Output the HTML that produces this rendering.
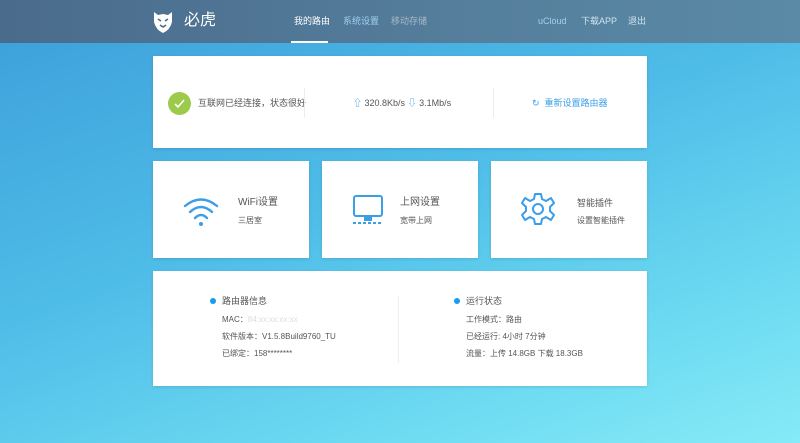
<!DOCTYPE html>
<html><head><meta charset="utf-8"><style>
*{margin:0;padding:0;box-sizing:border-box}
body{width:800px;height:443px;overflow:hidden;position:relative;font-family:"Liberation Sans","Noto Sans CJK SC",sans-serif;background:linear-gradient(160deg,#3c9ed9 0%,#4fbde8 45%,#6fdcf2 80%,#86eaf7 100%)}
.hdr{position:absolute;left:0;top:0;width:800px;height:43px;background:linear-gradient(90deg,#4a6b8c,#557f9c 60%,#5a8aa6);}
.hdr span{position:absolute;top:15px;font-size:9px;line-height:12px;color:#c8d8e6}
.card{position:absolute;background:#fff;box-shadow:0 1px 3px rgba(0,0,0,.12)}
.t{position:absolute;font-size:9px;line-height:12px;color:#555;white-space:nowrap}
.b{color:#3a9ee8}
</style></head><body>
<div class="hdr">
<svg style="position:absolute;left:152px;top:10px" width="22" height="24" viewBox="0 0 22 24"><path d="M2 2 L6 5 L11 4 L16 5 L20 2 L20 12 Q18 20 11 23 Q4 20 2 12Z" fill="#fff"/><path d="M6 9 L9 11 M16 9 L13 11 M8 15 L11 17 L14 15" stroke="#4a6b8c" stroke-width="1.6" fill="none"/></svg>
<span style="left:184px;top:11px;font-size:16px;line-height:20px;color:#fff">必虎</span>
<span style="left:294px;color:#fff">我的路由</span>
<div style="position:absolute;left:291px;top:41px;width:37px;height:2px;background:#fff"></div>
<span style="left:343px;color:#9fd0f0">系统设置</span>
<span style="left:391px;color:#a8b8c8">移动存储</span>
<span style="left:538px;color:#9fd0f0">uCloud</span>
<span style="left:581px;color:#cfe4f2">下载APP</span>
<span style="left:628px;color:#cfe4f2">退出</span>
</div>

<div class="card" style="left:153px;top:56px;width:494px;height:92px">
<div style="position:absolute;left:15px;top:36px;width:23px;height:23px;border-radius:50%;background:#9ccb4b"></div>
<svg style="position:absolute;left:15px;top:36px" width="23" height="23"><path d="M7 12 L10 15 L16 8" stroke="#fff" stroke-width="1.6" fill="none"/></svg>
<div class="t" style="left:45px;top:41px">互联网已经连接，状态很好</div>
<div style="position:absolute;left:151px;top:32px;width:1px;height:30px;background:#eee"></div>
<div class="t" style="left:200px;top:41px"><span class="b">⇧</span> 320.8Kb/s <span class="b">⇩</span> 3.1Mb/s</div>
<div style="position:absolute;left:340px;top:32px;width:1px;height:30px;background:#eee"></div>
<div class="t b" style="left:379px;top:41px">↻ &nbsp;重新设置路由器</div>
</div>

<div class="card" style="left:153px;top:161px;width:156px;height:97px">
<svg style="position:absolute;left:30px;top:36px" width="36" height="30" viewBox="0 0 36 30"><path d="M2 9 Q18 -4 34 9 M7 15 Q18 5 29 15 M12 21 Q18 15 24 21" stroke="#3a9ee8" stroke-width="2.4" fill="none" stroke-linecap="round"/><circle cx="18" cy="27" r="2" fill="#3a9ee8"/></svg>
<div class="t" style="left:85px;top:36px;font-size:10px">WiFi设置</div>
<div class="t" style="left:85px;top:54px;font-size:8px">三居室</div>
</div>
<div class="card" style="left:322px;top:161px;width:156px;height:97px">
<svg style="position:absolute;left:30px;top:33px" width="32" height="32" viewBox="0 0 32 32"><rect x="2" y="2" width="28" height="20" rx="2" stroke="#3a9ee8" stroke-width="2" fill="none"/><rect x="12" y="23" width="8" height="4" fill="#3a9ee8"/><path d="M1 29 H31" stroke="#3a9ee8" stroke-width="2" stroke-dasharray="3 2"/></svg>
<div class="t" style="left:78px;top:36px;font-size:10px">上网设置</div>
<div class="t" style="left:78px;top:54px;font-size:8px">宽带上网</div>
</div>
<div class="card" style="left:491px;top:161px;width:156px;height:97px">
<svg style="position:absolute;left:30px;top:31px" width="34" height="34" viewBox="0 0 34 34"><path d="M14 2 H20 L21 7 L25 9 L30 6 L33 11 L29 15 V19 L33 23 L30 28 L25 25 L21 27 L20 32 H14 L13 27 L9 25 L4 28 L1 23 L5 19 V15 L1 11 L4 6 L9 9 L13 7Z" stroke="#3a9ee8" stroke-width="2" fill="none" stroke-linejoin="round"/><circle cx="17" cy="17" r="5" stroke="#3a9ee8" stroke-width="2" fill="none"/></svg>
<div class="t" style="left:86px;top:36px;font-size:9px">智能插件</div>
<div class="t" style="left:86px;top:54px;font-size:8px">设置智能插件</div>
</div>

<div class="card" style="left:153px;top:271px;width:494px;height:115px">
<div style="position:absolute;left:57px;top:27px;width:6px;height:6px;border-radius:50%;background:#1a9af0"></div>
<div class="t" style="left:69px;top:24px;font-size:9px">路由器信息</div>
<div class="t" style="left:69px;top:43px;font-size:8px">MAC：<span style="color:#ddd">84:xx:xx:xx:xx</span></div>
<div class="t" style="left:69px;top:60px;font-size:8px">软件版本：V1.5.8Build9760_TU</div>
<div class="t" style="left:69px;top:77px;font-size:8px">已绑定：158********</div>
<div style="position:absolute;left:245px;top:25px;width:1px;height:67px;background:#eee"></div>
<div style="position:absolute;left:301px;top:27px;width:6px;height:6px;border-radius:50%;background:#1a9af0"></div>
<div class="t" style="left:313px;top:24px;font-size:9px">运行状态</div>
<div class="t" style="left:313px;top:43px;font-size:8px">工作模式：路由</div>
<div class="t" style="left:313px;top:60px;font-size:8px">已经运行: 4小时 7分钟</div>
<div class="t" style="left:313px;top:77px;font-size:8px">流量：上传 14.8GB 下载 18.3GB</div>
</div>
</body></html>
